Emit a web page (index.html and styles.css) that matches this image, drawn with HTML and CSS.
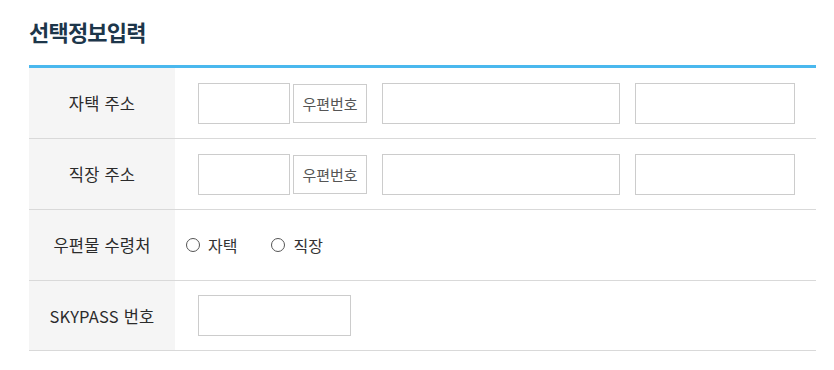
FILE: index.html
```html
<!DOCTYPE html>
<html lang="ko">
<head>
<meta charset="utf-8">
<link rel="stylesheet" href="styles.css">
</head>
<body>
<div class="page">
  <h2 class="title">선택정보입력</h2>
  <div class="form">
    <div class="row">
      <div class="label">자택 주소</div>
      <div class="field">
        <input class="inp zip" type="text">
        <button class="btn">우편번호</button>
        <input class="inp addr1" type="text">
        <input class="inp addr2" type="text">
      </div>
    </div>
    <div class="row">
      <div class="label">직장 주소</div>
      <div class="field">
        <input class="inp zip" type="text">
        <button class="btn">우편번호</button>
        <input class="inp addr1" type="text">
        <input class="inp addr2" type="text">
      </div>
    </div>
    <div class="row">
      <div class="label">우편물 수령처</div>
      <div class="field radios">
        <label class="radio"><span class="dot"></span>자택</label>
        <label class="radio"><span class="dot"></span>직장</label>
      </div>
    </div>
    <div class="row">
      <div class="label">SKYPASS 번호</div>
      <div class="field">
        <input class="inp sky" type="text">
      </div>
    </div>
  </div>
</div>
</body>
</html>
```
FILE: styles.css
```css
* { box-sizing: border-box; }
html, body { margin: 0; padding: 0; background: #fff; }
body {
  font-family: "Noto Sans CJK KR", "Noto Sans", sans-serif;
  color: #333;
}
.page {
  padding: 0 18px 0 29px;
}
.title {
  margin: 0;
  padding-top: 14px;
  height: 65px;
  font-size: 22px;
  font-weight: 700;
  color: #1d364a;
  letter-spacing: -0.8px;
  line-height: 34px;
}
.form {
  border-top: 3px solid #4ab8ee;
}
.row {
  display: flex;
  height: 71px;
  border-bottom: 1px solid #d9d9d9;
}
.row:last-child { height: 70px; }
.label {
  width: 146px;
  flex: none;
  background: #f5f5f5;
  display: flex;
  align-items: center;
  justify-content: center;
  font-size: 16.5px;
  color: #2b2b2b;
  letter-spacing: 0.2px;
}
.field {
  flex: 1;
  display: flex;
  align-items: center;
  padding-left: 23px;
}
.inp {
  height: 41px;
  border: 1px solid #cccccc;
  background: #fff;
  margin: 0;
  padding: 0;
}
.zip { width: 92px; }
.btn {
  width: 74px;
  height: 39px;
  margin: 0 15px 0 3px;
  padding: 0;
  border: 1px solid #cccccc;
  background: #fff;
  font-family: inherit;
  font-size: 15px;
  color: #555;
}
.addr1 { width: 238px; margin-right: 15px; }
.addr2 { width: 160px; }
.sky { width: 153px; }
.radios { padding-left: 11px; }
.radio {
  display: flex;
  align-items: center;
  font-size: 16px;
  color: #333;
  margin-right: 34px;
}
.dot {
  width: 14px;
  height: 14px;
  border: 1px solid #555;
  border-radius: 50%;
  margin-right: 8px;
}
```
